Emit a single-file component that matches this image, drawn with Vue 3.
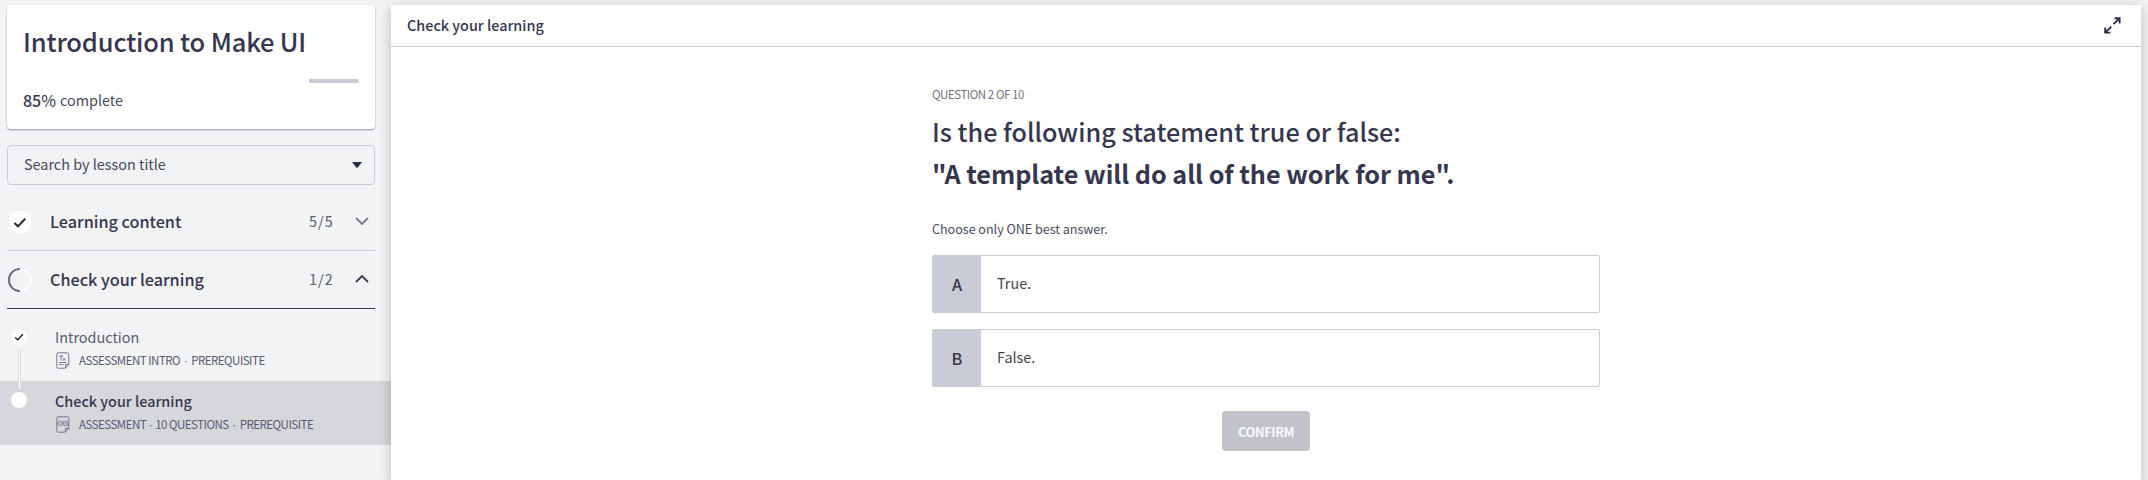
<script setup>
const sections = [
  { title: 'Learning content', count: '5/5', done: true, open: false },
  { title: 'Check your learning', count: '1/2', done: false, open: true },
]
const options = [
  { letter: 'A', text: 'True.' },
  { letter: 'B', text: 'False.' },
]
</script>

<template>
  <div class="app">
    <aside class="sidebar">
      <section class="card">
        <h1>Introduction to Make UI</h1>
        <div class="progress"><i></i></div>
        <p class="pct"><b>85<small>%</small></b> <span>complete</span></p>
      </section>
      <div class="search">
        <span>Search by lesson title</span>
        <svg width="10" height="6" viewBox="0 0 10 6"><path d="M0 0H10L5.8 5.4Q5 6.3 4.2 5.4Z" fill="#2d2d4a" /></svg>
      </div>
      <div v-for="s in sections" :key="s.title" class="section" :class="{ open: s.open }">
        <svg v-if="s.done" class="state" width="26" height="26" viewBox="0 0 26 26">
          <circle cx="13" cy="13" r="12" fill="#fff" stroke="#e6e7ea" stroke-width=".6" />
          <path d="M7.5 14L11 17.3L18.3 9.6" fill="none" stroke="#222" stroke-width="1.9" />
        </svg>
        <svg v-else class="state" width="26" height="26" viewBox="0 0 26 26">
          <circle cx="13" cy="13" r="12" fill="none" stroke="#d0d1d6" stroke-width=".6" />
          <path d="M13 2A11 11 0 0 1 13 24" fill="none" stroke="#fff" stroke-width="2" />
          <path d="M13 24.1A11.1 11.1 0 0 1 13 1.9" fill="none" stroke="#6b6b85" stroke-width="1.9" />
        </svg>
        <span class="name">{{ s.title }}</span>
        <span class="count">{{ s.count }}</span>
        <svg class="chev" width="14" height="8" viewBox="0 0 14 8" fill="none" stroke-width="1.8">
          <path v-if="s.open" d="M1 7L7 1L13 7" stroke="#3a3a55" />
          <path v-else d="M1 1L7 7L13 1" stroke="#777790" />
        </svg>
      </div>
      <div class="lessons">
        <div class="lesson">
          <svg class="dot" width="16" height="16" viewBox="0 0 16 16">
            <circle cx="8" cy="8" r="8" fill="#fff" />
            <path d="M4.2 8.5L6.7 10.8L12 5.3" fill="none" stroke="#222" stroke-width="1.4" />
          </svg>
          <i class="rail"></i>
          <div class="body">
            <div class="title">Introduction</div>
            <div class="meta">
              <svg width="14" height="17" viewBox="0 0 14 17" fill="none" stroke="#74748c" stroke-width="1">
                <path d="M2.2 .8H11.3Q12.8 .8 12.8 2.3V12.5L9.3 16.2H2.2Q.8 16.2 .8 14.7V2.3Q.8 .8 2.2 .8ZM12.8 12.5H9.4V16" />
                <path d="M3 4H7.2M5.1 4V8.5M7 6L9.5 8.7M9.5 6L7 8.7M3 10.5H10.5M3 12.7H7.5" />
              </svg>
              <span>ASSESSMENT INTRO</span><em>·</em><span>PREREQUISITE</span>
            </div>
          </div>
        </div>
        <div class="lesson active">
          <svg class="dot" width="16" height="16" viewBox="0 0 16 16"><circle cx="8" cy="8" r="8" fill="#fff" /></svg>
          <div class="body">
            <div class="title current">Check your learning</div>
            <div class="meta">
              <svg width="14" height="17" viewBox="0 0 14 17" fill="none" stroke="#74748c" stroke-width="1">
                <path d="M2.2 .8H11.3Q12.8 .8 12.8 2.3V12.5L9.3 16.2H2.2Q.8 16.2 .8 14.7V2.3Q.8 .8 2.2 .8ZM12.8 12.5H9.4V16" />
                <g stroke-width=".8"><circle cx="4.3" cy="7.4" r="2.4" /><circle cx="9.5" cy="7.4" r="2.4" /><path d="M3.1 7.4L4.1 8.4L5.8 6.4M8.5 6.4L10.5 8.4M10.5 6.4L8.5 8.4" /></g>
              </svg>
              <span>ASSESSMENT</span><em class="tight">·</em><span>10 QUESTIONS</span><em>·</em><span>PREREQUISITE</span>
            </div>
          </div>
        </div>
      </div>
    </aside>
    <main class="main">
      <header class="bar">
        <span>Check your learning</span>
        <svg width="17" height="17" viewBox="0 0 17 17" fill="none" stroke="#2d2d4a" stroke-width="1.9">
          <path d="M10.6 1.2H15.6V6.4M15.4 1.4L9.6 7.2M1.2 10.4V15.6H6.4M1.4 15.4L7.2 9.6" />
        </svg>
      </header>
      <div class="quiz">
        <p class="step">QUESTION 2 OF 10</p>
        <h2 class="q1">Is the following statement true or false:</h2>
        <h2 class="q2">"A template will do all of the work for me".</h2>
        <p class="hint">Choose only ONE best answer.</p>
        <div v-for="o in options" :key="o.letter" class="option">
          <b>{{ o.letter }}</b><span>{{ o.text }}</span>
        </div>
        <button class="confirm">CONFIRM</button>
      </div>
    </main>
  </div>
</template>

<style>
body { margin: 0; overflow: hidden; }
</style>
<style scoped>
* { box-sizing: border-box; margin: 0; padding: 0; }
.app { width: 2148px; height: 480px; overflow: hidden; display: flex; background: #f1f3f5; font-family: "Noto Sans CJK SC", "Noto Sans", sans-serif; color: #36364f; white-space: nowrap; }
svg { display: block; flex: none; }
.sidebar { width: 391px; flex: none; padding-top: 5px; }
.card { margin: 0 16px 0 7px; width: 368px; height: 124px; background: #fff; border-radius: 4px; padding: 18px 16px 0; box-shadow: 0 1px 2px rgba(40, 40, 60, .45); }
h1 { font-size: 25.5px; line-height: 36px; font-weight: 500; letter-spacing: -.17px; }
.progress { height: 4px; margin-top: 20px; display: flex; justify-content: flex-end; }
.progress i { width: 50px; height: 4px; background: #c9cbd6; border-radius: 0 2px 2px 0; }
.pct { margin-top: 5px; font-size: 14.4px; line-height: 24px; display: flex; gap: 4px; color: #4a4a5e; }
.pct b { font-weight: 500; font-size: 16px; color: #36364f; }
.pct small { font-weight: 400; font-size: 16px; }
.search { margin: 16px 0 8px 7px; width: 368px; height: 40px; border: 1px solid #c9cbd6; border-radius: 4px; display: flex; align-items: center; justify-content: space-between; padding: 0 12px 0 16px; font-size: 14.4px; color: #4a4a5e; }
.search span { margin-top: -3px; }
.section { margin-left: 7px; width: 368px; height: 58px; border-bottom: 1px solid #c9cbd6; display: flex; align-items: center; padding-bottom: 1px; }
.section.open { border-color: #3a3a55; }
.state { margin-top: 2px; }
.name { margin-left: 17px; flex: 1; font-size: 16.2px; font-weight: 500; line-height: 26px; }
.count { width: 24px; font-size: 14.4px; line-height: 24px; color: #5a5a72; letter-spacing: 1px; margin-right: 22px; }
.chev { margin-right: 6px; }
.lessons { padding-top: 8px; }
.lesson { height: 64px; position: relative; display: flex; padding-left: 11px; }
.lesson.active { background: #d6d7da; }
.dot { margin-top: 12px; }
.active .dot { margin-top: 11px; }
.rail { position: absolute; left: 18px; top: 32px; width: 3px; height: 40px; border: solid #dcdde1; border-width: 0 1px; background: #fff; z-index: 1; }
.body { padding: 7px 0 0 28px; }
.title { font-size: 14.4px; line-height: 26px; color: #5a5a72; }
.current { font-weight: 500; color: #36364f; }
.meta { display: flex; align-items: center; height: 20px; font-size: 11.5px; letter-spacing: -.5px; color: #5a5a72; }
.meta svg { margin: 0 9px 0 1px; }
.meta em { font-family: "Open Sans", sans-serif; font-style: normal; width: 11px; text-align: center; letter-spacing: 0; }
.meta .tight { width: 9px; }
.main { position: relative; z-index: 2; margin-top: 5px; width: 1750px; height: 480px; flex: none; background: #fff; box-shadow: 0 3px 12px rgba(0, 0, 0, .24); }
.bar { height: 42px; border-bottom: 1px solid #c9cbd6; display: flex; align-items: center; justify-content: space-between; padding: 0 20px 1px 16px; font-size: 14.4px; font-weight: 500; }
.bar span { margin-top: -2px; }
.quiz { width: 668px; margin: 0 auto; padding-top: 37px; display: flex; flex-direction: column; }
.step { font-size: 11.5px; line-height: 20px; color: #74747f; letter-spacing: -.45px; }
.q1, .q2 { font-size: 25.2px; line-height: 42px; font-weight: 500; }
.q1 { margin-top: 6px; }
.q2 { font-weight: 700; letter-spacing: -.04px; }
.hint { font-size: 12.6px; line-height: 20px; margin: 25px 0 16px; color: #4a4a5e; letter-spacing: -.04px; }
.option { height: 58px; border: 1px solid #c9cbd6; border-radius: 2px; margin-bottom: 16px; display: flex; align-items: stretch; font-size: 14.4px; line-height: 56px; color: #44444f; }
.option b { width: 48px; background: #c9cbd6; text-align: center; font-size: 16.2px; font-weight: 500; color: #36364a; margin-right: 16px; }
.option span { margin-top: -1px; }
.confirm { align-self: center; margin-top: 8px; width: 88px; height: 40px; border: 0; border-radius: 4px; background: #c2c3c9; color: #f7f7f9; font: 700 12.8px/39px "Noto Sans CJK SC", sans-serif; letter-spacing: -.35px; }
</style>
